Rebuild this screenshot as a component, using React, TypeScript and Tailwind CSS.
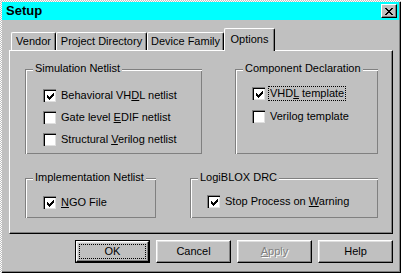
import type { ReactNode } from 'react';

const font = "font-['Liberation_Sans',Arial,sans-serif]";

function CheckMark() {
  return (
    <svg width="7" height="7" viewBox="0 0 7 7" shapeRendering="crispEdges">
      <path
        fill="#000"
        d="M6 0h1v1h-1z M5 1h2v1h-2z M0 2h1v1h-1z M4 2h3v1h-3z M0 3h2v1h-2z M3 3h3v1h-3z M0 4h5v1h-5z M1 5h3v1h-3z M2 6h1v1h-1z"
      />
    </svg>
  );
}

function CloseGlyph() {
  return (
    <svg width="8" height="7" viewBox="0 0 8 7" shapeRendering="crispEdges">
      <path
        fill="#000"
        d="M0 0h2v1h-2z M6 0h2v1h-2z M1 1h2v1h-2z M5 1h2v1h-2z M2 2h4v1h-4z M3 3h2v1h-2z M2 4h4v1h-4z M1 5h2v1h-2z M5 5h2v1h-2z M0 6h2v1h-2z M6 6h2v1h-2z"
      />
    </svg>
  );
}

function Checkbox({ checked, children, focus }: { checked?: boolean; children: ReactNode; focus?: boolean }) {
  return (
    <div className="flex items-center h-[13px]">
      <div className="w-[13px] h-[13px] shrink-0 bg-white border-t border-l border-[#808080] border-r-white border-b-white shadow-[inset_1px_1px_#000,inset_-1px_-1px_#dfdfdf] flex items-center justify-center">
        {checked && <CheckMark />}
      </div>
      <span
        className={`ml-[3px] px-[1px] text-[11px] leading-[13px] text-black whitespace-nowrap ${
          focus ? 'border border-dotted border-black' : 'border border-transparent'
        }`}
      >
        {children}
      </span>
    </div>
  );
}

function Group({
  title,
  className,
  children,
}: {
  title: string;
  className: string;
  children: ReactNode;
}) {
  return (
    <div
      className={`relative border-t border-l border-[#808080] border-r-white border-b-white shadow-[inset_1px_1px_#fff,inset_-1px_-1px_#808080] ${className}`}
    >
      <span className="absolute top-[-8px] left-[7px] px-[2px] bg-[#c0c0c0] text-[11px] leading-[13px] text-black whitespace-nowrap">
        {title}
      </span>
      {children}
    </div>
  );
}

function Tab({ label, selected, className }: { label: string; selected?: boolean; className: string }) {
  return (
    <div
      className={`flex items-start justify-center bg-[#c0c0c0] border-l border-t border-white border-r border-r-black rounded-tl-[2px] rounded-tr-[2px] shadow-[inset_-1px_0_#808080] text-[11px] leading-[13px] text-black whitespace-nowrap ${
        selected ? 'h-[23px] pt-[4px] relative z-10 -mb-[1px]' : 'h-[18px] pt-[2px]'
      } ${className}`}
    >
      {label}
    </div>
  );
}

function Button({ children, isDefault, disabled }: { children: ReactNode; isDefault?: boolean; disabled?: boolean }) {
  return (
    <div className={`w-[75px] h-[23px] ${isDefault ? 'border border-black' : ''}`}>
      <div className="w-full h-full flex items-center justify-center bg-[#c0c0c0] border-t border-l border-white border-r border-b border-r-black border-b-black shadow-[inset_-1px_-1px_#808080,inset_1px_1px_#dfdfdf]">
        <span
          className={`text-[11px] leading-[13px] ${
            disabled ? 'text-[#808080] [text-shadow:1px_1px_0_#fff]' : 'text-black'
          } ${isDefault ? 'border border-dotted border-black w-[67px] h-[15px] flex items-center justify-center' : ''}`}
        >
          {children}
        </span>
      </div>
    </div>
  );
}

export default function App() {
  return (
    <div
      className={`w-[401px] h-[273px] pl-[2px] pt-[2px] bg-[image:repeating-conic-gradient(#c0c0c0_0%_25%,#ffffff_0%_50%)] bg-[length:2px_2px] ${font}`}
    >
      <div className="w-[399px] h-[271px] bg-[#c0c0c0] shadow-[inset_-1px_-1px_#000,inset_-2px_-2px_#808080] flex flex-col">
        {/* title bar */}
        <div className="h-[18px] mr-[2px] bg-[#00ffff] flex items-center justify-between pl-[4px] pr-[2px]">
          <span className="text-[13px] font-bold text-black leading-[16px]">Setup</span>
          <div className="w-[16px] h-[14px] bg-[#c0c0c0] border-t border-l border-white border-r border-b border-r-black border-b-black shadow-[inset_-1px_-1px_#808080] flex items-center justify-center">
            <CloseGlyph />
          </div>
        </div>

        {/* tabs */}
        <div className="mt-[8px] pl-[9px] h-[22px] flex items-end">
          <Tab label="Vendor" className="w-[45px]" />
          <Tab label="Project Directory" className="w-[91px]" />
          <Tab label="Device Family" className="w-[77px]" />
          <Tab label="Options" selected className="w-[51px]" />
        </div>

        {/* panel */}
        <div className="ml-[7px] w-[384px] h-[184px] border-l border-t border-white border-r border-b border-r-black border-b-black shadow-[inset_-1px_-1px_#808080] pl-[15px] pt-[18px]">
          <div className="flex">
            <Group title="Simulation Netlist" className="w-[177px] h-[85px] pl-[17px] pt-[19px]">
              <div className="flex flex-col gap-[9px]">
                <Checkbox checked>
                  Behavioral VH<u>D</u>L netlist
                </Checkbox>
                <Checkbox>
                  Gate level <u>E</u>DIF netlist
                </Checkbox>
                <Checkbox>
                  Structural <u>V</u>erilog netlist
                </Checkbox>
              </div>
            </Group>
            <Group title="Component Declaration" className="ml-[33px] w-[143px] h-[85px] pl-[16px] pt-[17px]">
              <div className="flex flex-col gap-[10px]">
                <Checkbox checked focus>
                  VHD<u>L</u> template
                </Checkbox>
                <Checkbox>Verilog template</Checkbox>
              </div>
            </Group>
          </div>
          <div className="flex mt-[24px]">
            <Group title="Implementation Netlist" className="w-[131px] h-[40px] pl-[17px] pt-[17px]">
              <Checkbox checked>
                <u>N</u>GO File
              </Checkbox>
            </Group>
            <Group title="LogiBLOX DRC" className="ml-[34px] w-[188px] h-[40px] pl-[16px] pt-[16px]">
              <Checkbox checked>
                Stop Process on <u>W</u>arning
              </Checkbox>
            </Group>
          </div>
        </div>

        {/* buttons */}
        <div className="ml-[7px] w-[384px] mt-[6px] flex justify-end gap-[6px]">
          <Button isDefault>OK</Button>
          <Button>Cancel</Button>
          <Button disabled>
            <u>A</u>pply
          </Button>
          <Button>Help</Button>
        </div>
      </div>
    </div>
  );
}
